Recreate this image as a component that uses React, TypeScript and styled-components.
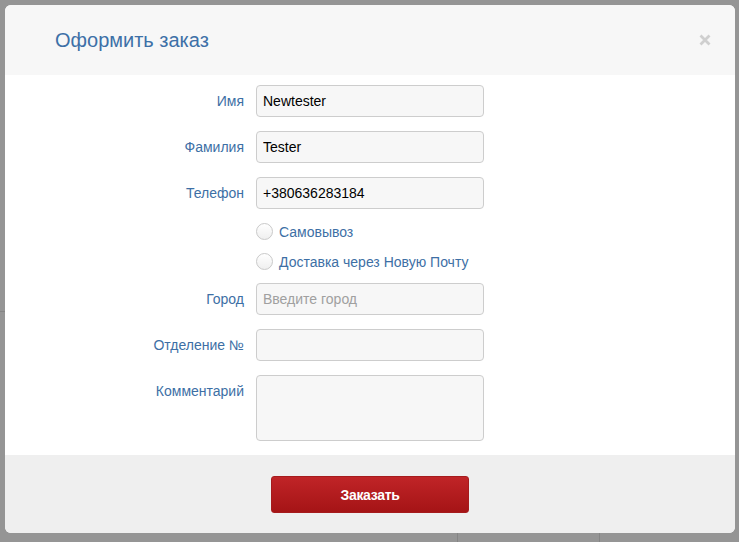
import React from "react";
import styled, { createGlobalStyle } from "styled-components";

const Global = createGlobalStyle`
  html, body { margin: 0; padding: 0; }
  body {
    width: 739px;
    height: 542px;
    overflow: hidden;
    font-family: "Liberation Sans", Arial, sans-serif;
    background-color: #959595;
    background-image:
      linear-gradient(#858585, #858585),
      linear-gradient(#858585, #858585),
      linear-gradient(#858585, #858585);
    background-size: 5px 1px, 1px 9px, 1px 9px;
    background-position: 0 311px, 457px 533px, 599px 533px;
    background-repeat: no-repeat;
  }
  * { box-sizing: border-box; }
`;

const Page = styled.div`
  padding: 5px 4px 9px 5px;
`;

const Modal = styled.div`
  width: 730px;
  height: 528px;
  background: #fff;
  border-radius: 6px;
  overflow: hidden;
  display: flex;
  flex-direction: column;
`;

const Header = styled.div`
  height: 70px;
  flex: none;
  background: #f7f7f7;
  display: flex;
  align-items: center;
  justify-content: space-between;
  padding: 0 24px 0 50px;
`;

const Title = styled.h4`
  margin: 0;
  font-size: 20px;
  font-weight: normal;
  color: #3d70a7;
  line-height: 1;
  padding-bottom: 1px;
`;

const Close = styled.button`
  border: none;
  background: none;
  padding: 0;
  width: 12px;
  height: 12px;
  display: flex;
  cursor: pointer;
`;

const Body = styled.div`
  flex: 1;
  padding: 10px 0 14px 0;
`;

const Form = styled.form`
  display: grid;
  grid-template-columns: 239px 228px;
  column-gap: 12px;
  row-gap: 14px;
  align-items: start;
`;

const Label = styled.label`
  text-align: right;
  font-size: 14px;
  line-height: 32px;
  color: #3d6fa5;
  white-space: nowrap;
`;

const Input = styled.input`
  width: 228px;
  height: 32px;
  border: 1px solid #cdcdcd;
  border-radius: 4px;
  background: #f7f7f7;
  padding: 0 6px;
  font-family: "Liberation Sans", Arial, sans-serif;
  font-size: 14px;
  color: #000;
  outline: none;
  &::placeholder { color: #a0a0a0; }
`;

const TextArea = styled.textarea`
  width: 228px;
  height: 66px;
  border: 1px solid #cdcdcd;
  border-radius: 4px;
  background: #f7f7f7;
  padding: 6px;
  font-family: "Liberation Sans", Arial, sans-serif;
  font-size: 14px;
  resize: none;
  outline: none;
  display: block;
`;

const RadioGroup = styled.div`
  grid-column: 2;
  display: flex;
  flex-direction: column;
  gap: 13px;
  margin-bottom: -1px;
`;

const RadioRow = styled.label`
  display: flex;
  align-items: center;
  gap: 6px;
  height: 17px;
  font-size: 14px;
  color: #3d6fa5;
  white-space: nowrap;
  cursor: pointer;
`;

const RadioCircle = styled.span`
  width: 17px;
  height: 17px;
  border-radius: 50%;
  border: 1px solid #c9c9c9;
  background: linear-gradient(#ffffff, #efefef);
  flex: none;
`;

const Footer = styled.div`
  height: 78px;
  flex: none;
  background: #efefef;
  display: flex;
  justify-content: center;
  padding-top: 21px;
`;

const SubmitButton = styled.button`
  width: 198px;
  height: 37px;
  border: 1px solid #a51b1d;
  border-radius: 3px;
  background: linear-gradient(#c02427, #a51416);
  color: #fff;
  font-family: "Liberation Sans", Arial, sans-serif;
  font-weight: bold;
  font-size: 14px;
  letter-spacing: -0.3px;
  cursor: pointer;
`;

export default function App() {
  return (
    <>
      <Global />
      <Page>
        <Modal>
          <Header>
            <Title>Оформить заказ</Title>
            <Close aria-label="close">
              <svg width="12" height="12" viewBox="0 0 12 12">
                <path d="M1.5 1.5 L10.5 10.5 M10.5 1.5 L1.5 10.5" stroke="#cfcfcf" strokeWidth="2.8" strokeLinecap="butt" />
              </svg>
            </Close>
          </Header>
          <Body>
            <Form>
              <Label>Имя</Label>
              <Input defaultValue="Newtester" />
              <Label>Фамилия</Label>
              <Input defaultValue="Tester" />
              <Label>Телефон</Label>
              <Input defaultValue="+380636283184" />
              <RadioGroup>
                <RadioRow><RadioCircle />Самовывоз</RadioRow>
                <RadioRow><RadioCircle />Доставка через Новую Почту</RadioRow>
              </RadioGroup>
              <Label>Город</Label>
              <Input placeholder="Введите город" />
              <Label>Отделение №</Label>
              <Input />
              <Label>Комментарий</Label>
              <TextArea />
            </Form>
          </Body>
          <Footer>
            <SubmitButton type="button">Заказать</SubmitButton>
          </Footer>
        </Modal>
      </Page>
    </>
  );
}
